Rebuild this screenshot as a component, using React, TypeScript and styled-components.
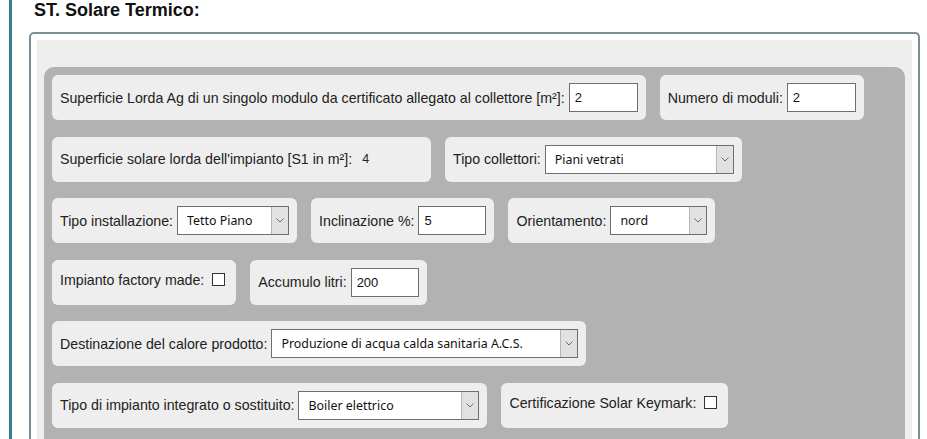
import React from 'react';
import styled, { createGlobalStyle } from 'styled-components';

const GlobalStyle = createGlobalStyle`
  html, body {
    margin: 0;
    padding: 0;
    background: #ffffff;
    font-family: 'Liberation Sans', Arial, sans-serif;
  }
`;

const Page = styled.div`
  padding-left: 9px;
  height: 439px;
  overflow: hidden;
`;

const Section = styled.div`
  border-left: 3px solid #3b7f94;
  padding: 0 7px 0 17px;
  height: 100%;
`;

const Title = styled.h3`
  margin: 0 0 12px 5px;
  font-size: 18px;
  line-height: 20px;
  font-weight: bold;
  color: #111;
`;

const Fieldset = styled.div`
  border: 2px solid #7e8e97;
  border-bottom: none;
  border-radius: 5px 5px 0 0;
  padding: 6px 6px 0 6px;
`;

const Inner = styled.div`
  background: #eeeeee;
  padding: 27px 7px 20px 7px;
`;

const Panel = styled.div`
  background: #b2b2b2;
  border-radius: 10px;
  padding: 8px 8px 20px 8px;
  display: flex;
  flex-direction: column;
  gap: 16.6px;
`;

const Row = styled.div`
  display: flex;
  gap: 14px;
`;

const Card = styled.div<{ $top?: boolean; $width?: number }>`
  display: flex;
  align-items: ${(p) => (p.$top ? 'flex-start' : 'center')};
  box-sizing: border-box;
  height: 45px;
  padding: ${(p) => (p.$top ? '12px 8px 0 8px' : '0 8px')};
  width: ${(p) => (p.$width ? `${p.$width}px` : 'auto')};
  background: #eeeeee;
  border-radius: 6px;
`;

const Label = styled.label`
  font-size: 14.2px;
  line-height: 16px;
  color: #222;
  white-space: nowrap;
  margin-right: 4px;
`;

const Value = styled.span`
  font-size: 12.5px;
  color: #222;
  margin-left: 6px;
`;

const TextInput = styled.input<{ $width: number }>`
  box-sizing: border-box;
  width: ${(p) => p.$width}px;
  height: 29px;
  border: 1px solid #6f6f6f;
  background: #fff;
  padding: 0 5px;
  font-family: 'Liberation Sans', Arial, sans-serif;
  font-size: 13px;
  color: #111;
  outline: none;
`;

const SelectWrap = styled.div<{ $width: number }>`
  position: relative;
  width: ${(p) => p.$width}px;
  height: 29px;
`;

const Select = styled.select`
  appearance: none;
  box-sizing: border-box;
  width: 100%;
  height: 100%;
  border: 1px solid #6f6f6f;
  border-radius: 0;
  background: #fff;
  padding: 0 20px 0 9px;
  font-family: 'Noto Sans', 'DejaVu Sans', sans-serif;
  font-size: 12.4px;
  color: #111;
  outline: none;
`;

const Arrow = styled.span`
  position: absolute;
  top: 1px;
  right: 1px;
  bottom: 1px;
  width: 16px;
  background: #e1e1e1;
  border-left: 1px solid #b5b5b5;
  display: flex;
  align-items: center;
  justify-content: center;
  pointer-events: none;
`;

const Checkbox = styled.input`
  appearance: none;
  box-sizing: border-box;
  width: 13px;
  height: 13px;
  margin: 1px 3px 0 4px;
  border: 1px solid #333;
  background: #fff;
`;

function Chevron() {
  return (
    <svg width="8" height="5" viewBox="0 0 8 5">
      <path d="M0.5 0.5 L4 4 L7.5 0.5" fill="none" stroke="#6a6a6a" strokeWidth="1" />
    </svg>
  );
}

interface DropdownProps {
  width: number;
  value: string;
}

function Dropdown({ width, value }: DropdownProps) {
  return (
    <SelectWrap $width={width}>
      <Select defaultValue={value}>
        <option>{value}</option>
      </Select>
      <Arrow>
        <Chevron />
      </Arrow>
    </SelectWrap>
  );
}

export default function App() {
  return (
    <>
      <GlobalStyle />
      <Page>
        <Section>
          <Title>ST. Solare Termico:</Title>
          <Fieldset>
            <Inner>
              <Panel>
                <Row>
                  <Card>
                    <Label>Superficie Lorda Ag di un singolo modulo da certificato allegato al collettore [m²]:</Label>
                    <TextInput $width={69} defaultValue="2" />
                  </Card>
                  <Card>
                    <Label>Numero di moduli:</Label>
                    <TextInput $width={69} defaultValue="2" />
                  </Card>
                </Row>
                <Row>
                  <Card $width={379}>
                    <Label>Superficie solare lorda dell'impianto [S1 in m²]:</Label>
                    <Value>4</Value>
                  </Card>
                  <Card>
                    <Label>Tipo collettori:</Label>
                    <Dropdown width={189} value="Piani vetrati" />
                  </Card>
                </Row>
                <Row>
                  <Card>
                    <Label>Tipo installazione:</Label>
                    <Dropdown width={112} value="Tetto Piano" />
                  </Card>
                  <Card>
                    <Label>Inclinazione %:</Label>
                    <TextInput $width={68} defaultValue="5" />
                  </Card>
                  <Card>
                    <Label>Orientamento:</Label>
                    <Dropdown width={97} value="nord" />
                  </Card>
                </Row>
                <Row>
                  <Card $top>
                    <Label>Impianto factory made: </Label>
                    <Checkbox type="checkbox" />
                  </Card>
                  <Card>
                    <Label>Accumulo litri:</Label>
                    <TextInput $width={68} defaultValue="200" />
                  </Card>
                </Row>
                <Row>
                  <Card>
                    <Label>Destinazione del calore prodotto:</Label>
                    <Dropdown width={307} value="Produzione di acqua calda sanitaria A.C.S." />
                  </Card>
                </Row>
                <Row>
                  <Card>
                    <Label>Tipo di impianto integrato o sostituito:</Label>
                    <Dropdown width={181} value="Boiler elettrico" />
                  </Card>
                  <Card $top>
                    <Label>Certificazione Solar Keymark: </Label>
                    <Checkbox type="checkbox" />
                  </Card>
                </Row>
              </Panel>
            </Inner>
          </Fieldset>
        </Section>
      </Page>
    </>
  );
}
